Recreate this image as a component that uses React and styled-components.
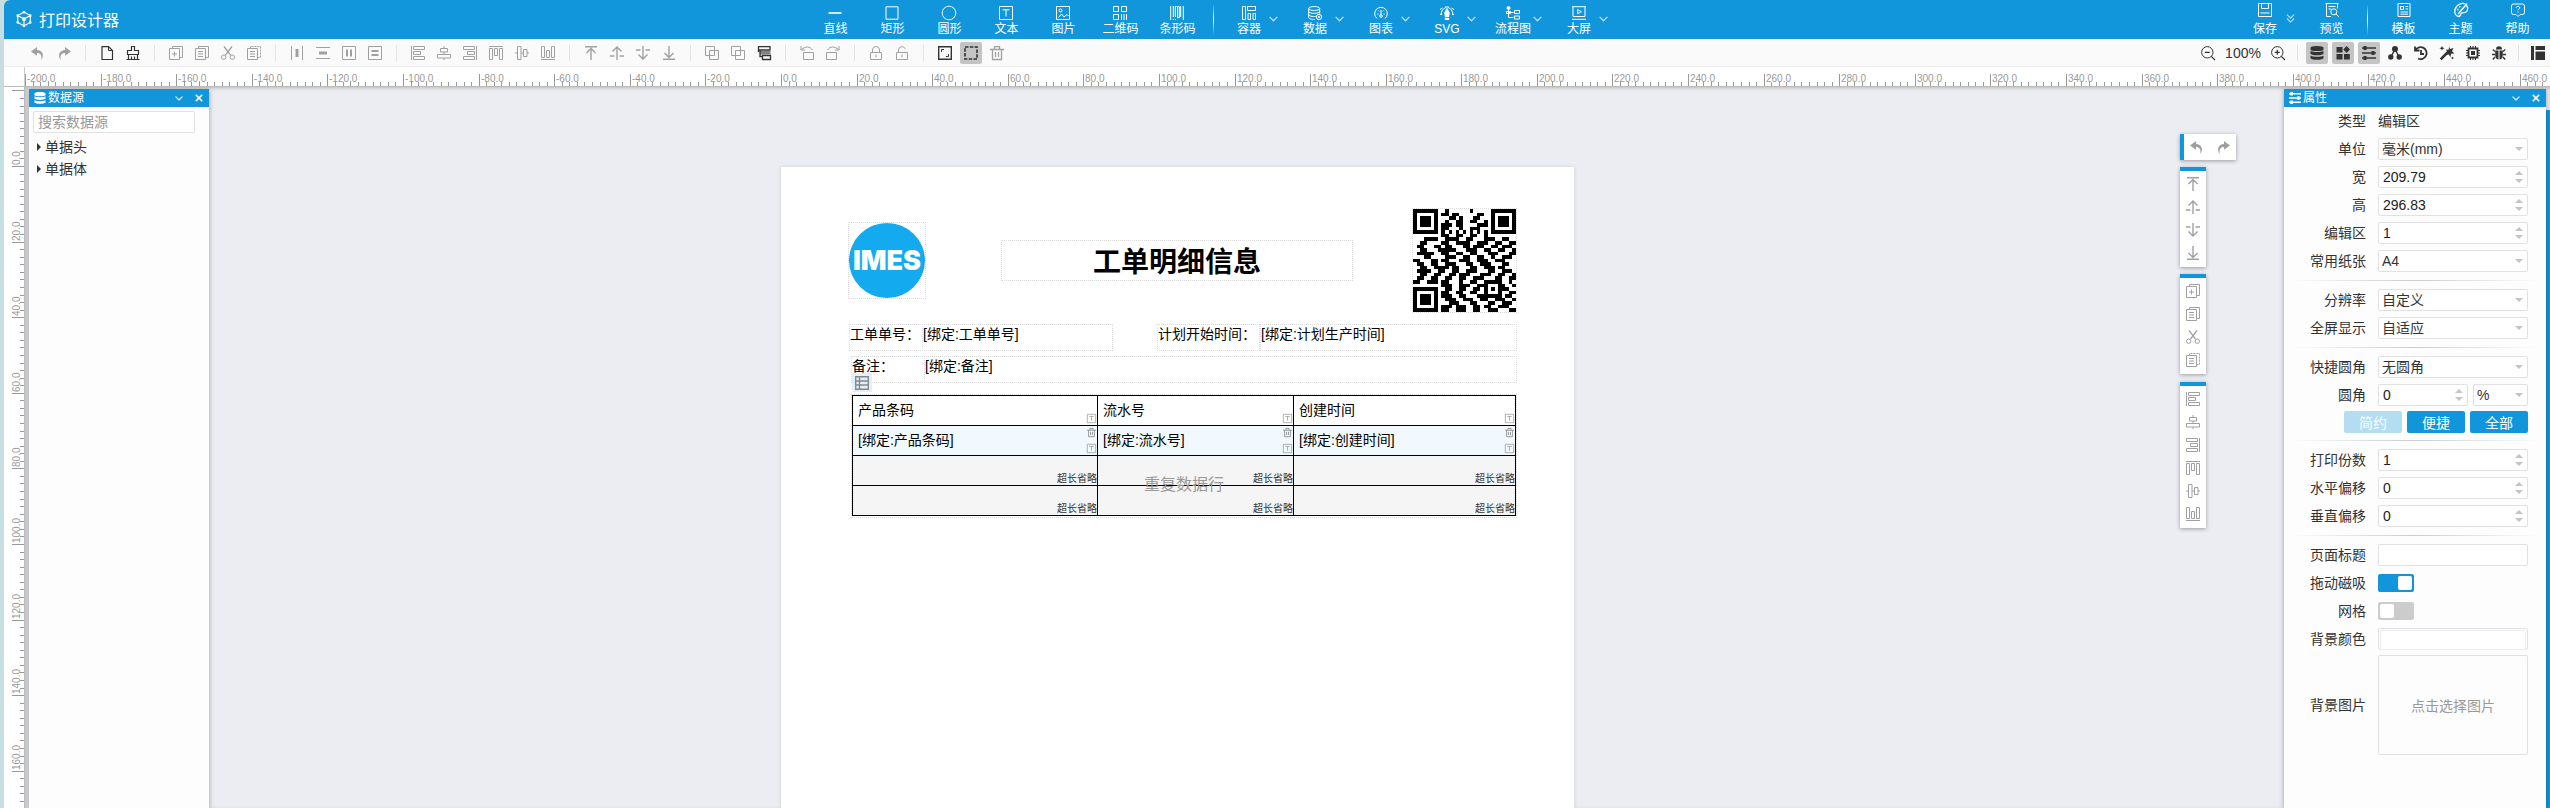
import React from "react";
import styled, { createGlobalStyle, css } from "styled-components";

const BLUE = "#1296db";
const LINE = "#e1e1e1";
const MM = 96 / 25.4;

const GlobalStyle = createGlobalStyle`
  * { box-sizing: border-box; }
  body {
    margin: 0;
    background: #c6dde1;
    color: #333;
    font-family: "Liberation Sans", "Noto Sans CJK SC", sans-serif;
    font-size: 14px;
    overflow: hidden;
  }
  button, input, select { font: inherit; color: inherit; margin: 0; }
  button { background: none; border: 0; padding: 0; }
`;

/* ---------- icons ---------- */

const L = (d, extra = {}) => <path d={d} {...extra} />;
const F = (d, extra = {}) => <path d={d} fill="currentColor" stroke="none" {...extra} />;

const ICONS = {
  undo: F("M6 1 0 5.600l6 4.200V7c3.600 0 5 2 4.300 7 3.500-5 1.200-9.700-4.300-10z"),
  redo: F("M8 1 14 5.600 8 9.800V7c-3.600 0-5 2-4.300 7C.2 9 2.500 4.300 8 4z"),
  file: <>{L("M2 .600h6.500l4 4v8.900H2z", { strokeWidth: 1.2 })}{L("M8.500.500v4h4")}</>,
  broom: <>{L("M5.500.500h3v4h4v4h-11v-4h4z", { strokeWidth: 1.2 })}{L("M2.500 8.500v5h9v-5M5.500 10.500v3M8.500 10.500v3M.5 13.500h13", { strokeWidth: 1.2 })}</>,
  copyAdd: <>{L("M3.500 2.500V.5h10v11h-3M.5 2.500h10v11H.5zM5.500 5.500v5M3 8h5")}</>,
  copy: <>{L("M3.500 2.500V.5h10v11h-3M.5 2.500h10v11H.5zM3 5.500h5M3 8h5M3 10.500h5")}</>,
  cut: <>{L("M3 .5 9.600 9.200M11 .5 4.400 9.200", { strokeWidth: 1.3 })}<circle cx="2.700" cy="11.200" r="2.200" /><circle cx="11.300" cy="11.200" r="2.200" /></>,
  paste: <>{L("M3.500 2.500V.5h10v11h-3", { strokeDasharray: "2 1" })}{L("M.5 2.500h10v11H.5zM3 5.500h5M3 8h5M3 10.500h5")}</>,
  distH: <>{L("M1.500 0v14M12.500 0v14")}{F("M5.500 3h3v8h-3z")}</>,
  distV: <>{L("M0 1.500h14M0 12.500h14")}{F("M3 5.500h8v3H3z")}</>,
  boxH: <>{L("M.5.5h13v13H.5z")}{F("M4 3.500h2v7H4zM8 3.500h2v7H8z")}</>,
  boxV: <>{L("M.5.5h13v13H.5z")}{F("M3.500 4h7v2h-7zM3.500 8h7v2h-7z")}</>,
  alignL: L("M.5 0v14M2.500.5h11v3h-11zM2.500 5.500h7v3h-7zM2.500 10.500h11v3h-11z"),
  alignC: L("M7 0v2.500M7 6v2.500M7 12v2M3.500 2.500h7v3.500h-7zM.5 8.500h13v3.500H.5z"),
  alignR: L("M13.500 0v14M.5.5h11v3H.5zM4.500 5.500h7v3h-7zM.5 10.500h11v3H.5z"),
  alignT: L("M0 .5h14M.5 2.500h3v11h-3zM5.500 2.500h3v7h-3zM10.500 2.500h3v11h-3z"),
  alignM: L("M0 7h2.500M6 7h2.500M12 7h2M2.500.5h3.500v13H2.500zM8.500 3.500h3.500v7H8.500z"),
  alignB: L("M0 13.500h14M.5.5h3v11h-3zM5.500 4.500h3v7h-3zM10.500.5h3v11h-3z"),
  toTop: L("M1 .7h12M7 14V2.500M2.500 7 7 2.500 11.500 7", { strokeWidth: 1.4 }),
  up: L("M7 14V1M2.500 5.500 7 1l4.500 4.500M0 10h4.500M9.500 10H14", { strokeWidth: 1.4 }),
  down: L("M7 0v13M2.500 8.500 7 13l4.500-4.500M0 4h4.500M9.500 4H14", { strokeWidth: 1.4 }),
  toBottom: L("M1 13.300h12M7 0v11.500M2.500 7 7 11.500 11.500 7", { strokeWidth: 1.4 }),
  group: L("M5.500 9.500h-5v-9h9v5M9.500 4.500h4v9h-9V8.500M5 9.500h4.500V5M4.500 9V4.500h5"),
  ungroup: L("M.5.5h9v9h-9zM4.500 4.500h9v9h-9z"),
  format: <>{L("M1.500.6h11.500v3.400H1.500z", { strokeWidth: 1.3 })}{F("M3 5h10.500v3.500H3z", { opacity: 0.6 })}{L("M5.500 9.500h8v4h-8zM3 4v6.500h2.500M1.500 4v2", { strokeWidth: 1.3 })}</>,
  rotL: L("M3.500 6.500h10v7h-10zM12.500 4C10 .3 5.500 0 1.500 3.500M1 0v4h4"),
  rotR: L("M.5 6.500h10v7H.5zM1.500 4C4 .3 8.500 0 12.500 3.500M13 0v4H9"),
  lock: L("M1.500 6.500h11v7h-11zM3.500 6.500V4a3.500 3.500 0 0 1 7 0v2.500M7 8.500v3"),
  unlock: L("M1.500 6.500h11v7h-11zM3.500 6.500V4a3.500 3.500 0 0 1 6.800-1M7 8.500v3"),
  fit: <>{L("M.7.7h12.600v12.600H.7z", { strokeWidth: 1.4 })}{L("M3.500 6V3.500H6M10.500 8v2.500H8")}</>,
  dashed: L("M1 1h12v12H1z", { strokeWidth: 1.600, strokeDasharray: "3.500 1.300" }),
  trash: L("M0 3.500h14M4.500 3V.7h5V3M2.500 3.500v10h9v-10M5.500 6v5M8.500 6v5", { strokeWidth: 1.3 }),
  zoomOut: <><circle cx="6.300" cy="6.300" r="5.700" />{L("M10.300 10.300 14 14M3.800 6.300h5", { strokeWidth: 1.2 })}</>,
  zoomIn: <><circle cx="6.300" cy="6.300" r="5.700" />{L("M10.300 10.300 14 14M3.800 6.300h5M6.300 3.800v5", { strokeWidth: 1.2 })}</>,
  db: F("M7 0c4 0 6.500.8 6.500 1.800v1.600C13.500 4.400 11 5 7 5S.5 4.400.5 3.400V1.800C.5.8 3 0 7 0zM.5 5c3 1.400 10 1.400 13 0v3C11 9.700 3 9.700.5 8zM.5 9.700c3 1.400 10 1.400 13 0v2.500c-2 2.200-11 2.200-13 0z"),
  blocks: F("M.5 1h6v5.500h-6zM.5 8h6v5.500h-6zM8 8h5.800v5.500H8zM10.600 0l3.400 3.500-3.400 3.500L7.300 3.500z"),
  sliders: <>{L("M0 2h14M0 7h14M0 12h14", { strokeWidth: 1.600 })}{F("M1.500 0h3v4h-3zM9.500 5h3v4h-3zM1.500 10h3v4h-3z")}</>,
  nodes: <>{L("M7 3 3 11M7 3l4 8", { strokeWidth: 1.500 })}<circle cx="7" cy="3" r="3" fill="currentColor" stroke="none" /><circle cx="2.800" cy="11" r="2.700" fill="currentColor" stroke="none" /><circle cx="11.200" cy="11" r="2.700" fill="currentColor" stroke="none" /></>,
  history: L("M1.500 4A6 6 0 1 1 4 12.500M1 .5V4.500h4.500M7 4v4h3", { strokeWidth: 1.800 }),
  wand: <>{L("M.7 13.300 8 6", { strokeWidth: 2.600 })}{F("M9 .5l1 2.500 3.500-1-1.500 3.200L14.500 7.500l-3.500.3-.5 3.500-1.800-2.800-3 .5 1.700-2.800L6 3.500l2.700.3zM2 0l.8 1.600L4.500 2.300l-1.700.7L2 4.600l-.8-1.600L-.5 2.300l1.700-.7zM12.500 10.500l.5 1 1 .5-1 .5-.5 1-.5-1-1-.5 1-.5z")}</>,
  chip: <>{L("M2.500 2.500h9v9h-9z", { strokeWidth: 1.800 })}{F("M5 5h4v4H5z")}{L("M4.500 0v2M7 0v2M9.500 0v2M4.500 12v2M7 12v2M9.500 12v2M0 4.500h2M0 7h2M0 9.500h2M12 4.500h2M12 7h2M12 9.500h2")}</>,
  bug: <>{F("M4 3.500C4 1.500 5 .3 7 .3s3 1.200 3 3.200zM3.200 4.500h3.300v9C4 13.200 3.200 11 3.200 9zM7.500 4.500h3.300V9c0 2-.8 4.200-3.300 4.500z")}{L("M3 5.500 .8 3.500M0 8.500h3M3 11l-2.200 2.500M11 5.500l2.200-2M14 8.500h-3M11 11l2.200 2.500", { strokeWidth: 1.300 })}</>,
  layout: F("M0 0h3v14H0zM4.500 0H14v4H4.500zM4.500 5.500H14V14H4.500z"),
  line: L("M.5 7h13", { strokeWidth: 1.600 }),
  rect: L("M1 .8h12v12.400H1z"),
  circle: <circle cx="7" cy="7" r="6.800" />,
  text: L("M.5.5h13v13H.5zM3.500 3.800h7M7 3.800v6.700"),
  image: <>{L("M.5.5h13v13H.5zM2.500 11.500 5.500 8 8 11l3-2.500 1.500 1.500")}<circle cx="4.500" cy="4.500" r="1.500" /></>,
  qr: L("M.5.5h5v5h-5zM8.500.5h5v5h-5zM.5 8.500h5v5h-5zM8.500 8v6M11 8v6M13.500 8v6"),
  barcode: <>{L("M.7 0v14M3.300 0v11M5.300 0v11M10.700 0v11M13.300 0v14")}{L("M3.300 13v1M5.300 13v1M7 0v1M7.500.7h1.800v11H7.500z")}</>,
  container: L("M.5.5h3v13h-3zM5.500.5h8v4h-8zM6 7.500h2.500v6H6zM11 7.500h2.500v6H11z"),
  data: <>{L("M.7 2.500c0-2.600 11-2.600 11 0s-11 2.600-11 0zM.7 2.500v9c0 1.400 3 2 6 2M.7 5.500c0 2.400 11 2.400 11 0M.7 8.500c0 1.600 4 2.400 7 1.800M11.700 2.500v5")}<circle cx="11" cy="11" r="2.700" />{L("M11 9.800v2.400M9.800 11h2.400")}</>,
  gauge: <>{L("M3 12.500A6.300 6.300 0 1 1 11 12.500M7 9V4M3.300 8h1.200M9.500 8h1.200M4.300 4.500l.8.800M9.700 4.500l-.8.800")}<circle cx="7" cy="10" r="1.300" /></>,
  pen: <>{F("M7 1.500 9.800 7 9 11H5L4.200 7zM4.800 11.800h4.400V14H4.800z")}{L("M1 8.500C1.500 5 3 2.500 5.500 1.800M13 8.500c-.5-3.500-2-6-4.500-6.700M5 1h4M0 3.500l2.500-1.500M14 3.500 11.500 2M0 8.500h2M12 8.500h2")}</>,
  flow: <>{L("M2.500 1v10.500h5M2.500 6.500h5M8.500 4.500h5v3h-5zM8.500 10h5v3h-5z")}<circle cx="2.500" cy="2" r="1.500" fill="currentColor" />{L("M.5 5.500h4v2h-4z")}</>,
  screen: L("M0 .7h14M1 .7v9.800h12V.7M0 13.300h14M5.700 3.500v4.200L9.300 5.600z"),
  save: L("M.5.5h13v13H.5zM3.500.5v5h7v-5M2.500 10h9"),
  preview: <>{L("M6 13.500H1.500V.5h11v5M.5.5h13M3.500 3.500h7M3.500 6h2.500")}<circle cx="8.800" cy="8.800" r="3" />{L("M11 11l2.800 2.800")}</>,
  template: L("M1 .5h12v13H1zM3.500 3.500h3v3h-3zM8.500 3.500h2.500M8.500 6h2.500M3.500 9h7.500M3.500 11.200h7.500"),
  theme: L("M11.500.8C7.500-.8 1.500 2 .8 7.500c-.4 3 1.200 5.500 3.700 6 2.500 0 1.500-2.300 3-3.500 1.600-1 4 .5 5.300-1.500C14 6.200 13.400 3.500 12.500 2.500M13 .8 4 11M3 6.500h1.500M5 3.800h1.500", { strokeWidth: 1.300 }),
  help: <>{L("M2.500 1h9a2 2 0 0 1 2 2v6.500a2 2 0 0 1-2 2H9l-2 2-2-2H2.500a2 2 0 0 1-2-2V3a2 2 0 0 1 2-2z")}{L("M5.300 4.800c0-2 3.400-2 3.400 0 0 1.200-1.700 1.200-1.700 2.500M7 8.500v1.200")}</>,
  cube: <>{L("M7 1l5.500 3v6L7 13 1.500 10V4zM1.500 4 7 7l5.500-3M7 7v6")}{F("M6 0h2v2H6zM6 12h2v2H6zM.5 3h2v2h-2zM11.500 3h2v2h-2zM.5 9h2v2h-2zM11.500 9h2v2h-2zM5.500 5.500h3v3h-3z")}</>,
  chevron: L("M1 4.500l6 6 6-6", { strokeWidth: 2 }),
  chevrons: L("M1.500 1 7 6.500l5.500-5.500M1.500 7 7 12.500l5.500-5.500", { strokeWidth: 1.800 }),
  close: L("M1.500 1.500l11 11M12.500 1.500l-11 11", { strokeWidth: 2.600 }),
  table: L("M.7.7h12.600v12.600H.7zM4.500.7v12.600M.7 5h12.600M.7 9h12.600", { strokeWidth: 1.4 }),
};

const Svg = styled.svg`
  display: block;
  flex: none;
  overflow: visible;
`;

const Icon = ({ name, size = 14 }) => (
  <Svg viewBox="0 0 14 14" width={size} height={size} fill="none" stroke="currentColor" strokeWidth="1" aria-hidden="true">
    {ICONS[name]}
  </Svg>
);

/* ---------- shell ---------- */

const Shell = styled.div`
  height: 100vh;
  margin-left: 4px;
  display: flex;
  flex-direction: column;
  background: #fff;
  border-top-left-radius: 6px;
  overflow: hidden;
`;

const TopBar = styled.header`
  flex: none;
  height: 39px;
  display: flex;
  background: ${BLUE};
  color: #fff;
`;

const Brand = styled.h1`
  width: 31.5%;
  margin: 0;
  padding: 0 0 2px 12px;
  display: flex;
  align-items: center;
  gap: 7px;
  font-size: 16px;
  font-weight: 400;
`;

const Group = styled.nav`
  display: flex;
  padding-left: 1px;
  ${(p) => p.$end && "margin-left: auto; padding-right: 4px;"}
`;

const TopButton = styled.button`
  width: ${(p) => (p.$compact ? 40 : 57)}px;
  padding-bottom: 2px;
  display: flex;
  flex-direction: column;
  align-items: center;
  justify-content: flex-end;
  gap: ${(p) => (p.$raised ? 4 : 1)}px;
  font-size: 12px;
  line-height: 16px;
  white-space: nowrap;
`;

const DropCell = styled.div`
  width: 66px;
  padding-left: 8px;
  display: flex;
`;

const DropArrow = styled.button`
  width: 10px;
  display: flex;
  align-items: center;
  justify-content: center;
  padding-bottom: 2px;
  opacity: 0.7;
`;

const TopDivider = styled.i`
  width: 1px;
  margin: 4px 7px;
  background: linear-gradient(transparent, #fff, transparent);
`;

const TopItem = ({ icon, label, drop, raised }) => {
  const button = (
    <TopButton $compact={!!drop} $raised={raised}>
      <Icon name={icon} />
      {label}
    </TopButton>
  );
  if (!drop) return button;
  return (
    <DropCell>
      {button}
      <DropArrow aria-label={label}>
        <Icon name={drop} size={9} />
      </DropArrow>
    </DropCell>
  );
};

/* ---------- tool bar ---------- */

const ToolBar = styled.div`
  flex: none;
  height: 28px;
  padding: 0 1px 0 23px;
  display: flex;
  align-items: center;
  justify-content: space-between;
  background: #fafafa;
  border-bottom: 1px solid #ececec;
`;

const ToolRow = styled.div`
  display: flex;
  align-items: center;
  gap: 4px;
`;

const ToolButton = styled.button`
  width: 22px;
  height: 22px;
  display: flex;
  align-items: center;
  justify-content: center;
  border-radius: 2px;
  color: ${(p) => (p.$dark ? "#333" : "#a0a0a0")};
  background: ${(p) => (p.$active ? "#c4c4c4" : "none")};
`;

const ToolDivider = styled.i`
  width: 1px;
  height: 16px;
  margin: 0 ${(p) => (p.$tight ? 4 : 6)}px;
  background: #e4e4e4;
`;

const ZoomText = styled.span`
  width: 40px;
  text-align: center;
`;

const LEFT_TOOLS = [
  "undo", "redo", "|", "*file", "*broom", "|", "copyAdd", "copy", "cut", "paste", "|",
  "distH", "distV", "boxH", "boxV", "|", "alignL", "alignC", "alignR", "alignT", "alignM", "alignB", "|",
  "toTop", "up", "down", "toBottom", "|", "group", "ungroup", "*format", "|", "rotL", "rotR", "|",
  "lock", "unlock", "|", "*fit", "#dashed", "trash",
];
const RIGHT_TOOLS = ["#db", "#blocks", "#sliders", "*nodes", "*history", "*wand", "*chip", "*bug", "|", "*layout"];

const Tools = ({ list, tight }) =>
  list.map((t, i) => {
    if (t === "|") return <ToolDivider key={i} $tight={tight} />;
    const name = t.replace(/[*#]/, "");
    return (
      <ToolButton key={i} $dark={name !== t} $active={t[0] === "#"} aria-label={name}>
        <Icon name={name} />
      </ToolButton>
    );
  });

/* ---------- rulers ---------- */

const RulerRow = styled.div`
  flex: none;
  height: 20px;
  display: flex;
  border-bottom: 1px solid #bbb;
`;

const RulerCorner = styled.div`
  width: 21px;
  border-right: 1px solid #ccc;
`;

const RulerSvg = styled.svg`
  display: block;
  flex: 1;
  min-width: 0;
  width: 100%;
  height: 100%;
  fill: #999;
  font-size: 10px;
`;

const SideRuler = styled.div`
  flex: none;
  width: 21px;
  border-right: 1px solid #bbb;
`;

const range = (from, to, step) => {
  const out = [];
  for (let v = from; v <= to; v += step) out.push(v);
  return out;
};

const HRuler = ({ origin }) => (
  <RulerSvg>
    {range(-200, 468, 2).map((v) => {
      const x = Math.round(origin + v * MM);
      const major = v % 20 === 0;
      return (
        <g key={v}>
          <rect x={x} y={major ? 7 : 15} width="1" height={major ? 12 : 4} />
          {major && <text x={x + 2} y="15">{v.toFixed(1)}</text>}
        </g>
      );
    })}
  </RulerSvg>
);

const VRuler = ({ origin }) => (
  <RulerSvg>
    {range(-20, 170, 2).map((v) => {
      const y = Math.round(origin + v * MM);
      const major = v % 20 === 0;
      return (
        <g key={v}>
          <rect x={major ? 8 : 16} y={y} width={major ? 12 : 4} height="1" />
          {major && v >= 0 && <text transform={`translate(16 ${y - 1}) rotate(-90)`}>{v.toFixed(1)}</text>}
        </g>
      );
    })}
  </RulerSvg>
);

/* ---------- work area ---------- */

const Body = styled.main`
  flex: 1;
  min-height: 0;
  display: flex;
`;

const Canvas = styled.div`
  position: relative;
  flex: 1;
  min-width: 0;
  display: flex;
  justify-content: space-between;
  padding: 2px 0 0 4px;
  background: #ecedf3;
  box-shadow: inset 0 3px 4px -2px #bbb, inset 3px 0 4px -2px #bbb;
  overflow: hidden;
`;

const Panel = styled.section`
  position: relative;
  width: ${(p) => p.$width}px;
  display: flex;
  flex-direction: column;
  background: #fdfdfd;
  box-shadow: 0 1px 5px rgba(0, 0, 0, 0.35);
`;

const PanelHead = styled.header`
  flex: none;
  height: 18px;
  padding: 0 6px 0 5px;
  display: flex;
  align-items: center;
  gap: 2px;
  background: ${BLUE};
  color: #fff;
  font-size: 12px;
  line-height: 18px;
`;

const PanelTitle = styled.h2`
  flex: 1;
  margin: 0;
  font-size: 12px;
  font-weight: 400;
`;

const HeadButtons = styled.div`
  display: flex;
  gap: 12px;
`;

const Head = ({ icon, title }) => (
  <PanelHead>
    <Icon name={icon} size={12} />
    <PanelTitle>{title}</PanelTitle>
    <HeadButtons>
      <button aria-label="collapse"><Icon name="chevron" size={8} /></button>
      <button aria-label="close"><Icon name="close" size={8} /></button>
    </HeadButtons>
  </PanelHead>
);

const fieldBox = css`
  height: 22px;
  width: 100%;
  padding: 0 4px;
  border: 1px solid ${LINE};
  border-radius: 2px;
  background: #fff;
  outline: none;
`;

const Search = styled.input`
  ${fieldBox}
  width: 162px;
  margin: 4px 4px 3px;
  &::placeholder { color: #999; opacity: 1; }
`;

const Tree = styled.ul`
  list-style: none;
  margin: 0;
  padding: 0 0 0 8px;
`;

const TreeItem = styled.li`
  height: 22px;
  line-height: 22px;
  display: flex;
  align-items: center;
  gap: 4px;
  &::before {
    content: "";
    border-left: 4px solid #333;
    border-top: 4px solid transparent;
    border-bottom: 4px solid transparent;
  }
`;

const RightDock = styled.div`
  display: flex;
`;

const Edge = styled.div`
  width: 4px;
  margin-top: 21px;
  background: ${BLUE};
`;

/* ---------- property form ---------- */

const PropRow = styled.div`
  flex: none;
  min-height: 28px;
  padding: ${(p) => (p.$tall ? 2 : 0)}px 18px ${(p) => (p.$tall ? 2 : 0)}px 0;
  display: flex;
  align-items: center;
  gap: 12px;
`;

const PropLabel = styled.label`
  flex: 1;
  padding-bottom: 2px;
  text-align: right;
`;

const PropText = styled.span`
  padding-bottom: 2px;
`;

const PropValue = styled.div`
  width: 150px;
  display: flex;
  gap: 5px;
`;

const Control = styled.span`
  position: relative;
  display: block;
  flex: ${(p) => (p.$width ? `0 0 ${p.$width}px` : 1)};
  &::before, &::after {
    content: "";
    position: absolute;
    right: 5px;
    border: 4px solid transparent;
    pointer-events: none;
  }
  ${(p) => p.$kind === "select" && `&::after { top: 9px; border-top-color: #c4c4c4; border-bottom: 0; }`}
  ${(p) => p.$kind === "number" && `
    &::before { top: 5px; border-bottom-color: #c4c4c4; border-top: 0; }
    &::after { top: 13px; border-top-color: #c4c4c4; border-bottom: 0; }
  `}
`;

const Select = styled.select`
  ${fieldBox}
  display: block;
  padding: 0 3px;
  appearance: none;
`;

const Input = styled.input`
  ${fieldBox}
  display: block;
  color: #222;
`;

const SelectField = ({ id, value, width }) => (
  <Control $kind="select" $width={width}>
    <Select id={id} aria-label={id} defaultValue={value}><option>{value}</option></Select>
  </Control>
);

const NumberField = ({ id, value, width }) => (
  <Control $kind="number" $width={width}>
    <Input id={id} inputMode="decimal" defaultValue={value} />
  </Control>
);

const Divider = styled.hr`
  flex: none;
  width: 250px;
  height: 1px;
  margin: 5px auto;
  border: 0;
  background: linear-gradient(90deg, transparent, #ccc, transparent);
`;

const ButtonRow = styled.div`
  padding: 2px 18px 2px 0;
  display: flex;
  justify-content: flex-end;
  gap: 5px;
`;

const SmallButton = styled.button`
  width: 58px;
  height: 22px;
  border-radius: 2px;
  background: ${BLUE};
  color: #fff;
  opacity: ${(p) => (p.disabled ? 0.3 : 1)};
`;

const Switch = styled.input`
  appearance: none;
  width: 36px;
  height: 18px;
  padding: 2px;
  display: flex;
  background: #ccc;
  border-radius: 2px;
  &::before {
    content: "";
    width: 14px;
    height: 14px;
    background: #fff;
    border-radius: 2px;
  }
  &:checked { background: ${BLUE}; justify-content: flex-end; }
`;

const ColorButton = styled.button`
  ${fieldBox}
  padding: 1px;
  &::before {
    content: "";
    display: block;
    height: 18px;
    border: 1px solid #ecedf3;
  }
`;

const PictureButton = styled.button`
  width: 150px;
  height: 100px;
  border: 1px solid ${LINE};
  border-radius: 2px;
  color: #999;
`;

const Row = ({ label, id, children, tall }) => (
  <PropRow $tall={tall}>
    <PropLabel htmlFor={id}>{label}</PropLabel>
    <PropValue>{children}</PropValue>
  </PropRow>
);

/* ---------- floating palettes ---------- */

const Palette = styled.div`
  position: absolute;
  right: ${(p) => (p.$row ? 314 : 344)}px;
  top: ${(p) => p.$top}px;
  display: flex;
  flex-direction: ${(p) => (p.$row ? "row" : "column")};
  align-items: center;
  gap: ${(p) => (p.$row ? 4 : 1)}px;
  padding: ${(p) => (p.$row ? "2px" : "2px 2px 3px")};
  border: 0 solid ${BLUE};
  ${(p) => (p.$row ? "border-left-width: 4px;" : "border-top-width: 4px;")}
  background: #fff;
  box-shadow: 0 1px 4px rgba(0, 0, 0, 0.35);
`;

const PALETTES = [
  { top: 47, row: true, items: ["undo", "redo"] },
  { top: 80, items: ["toTop", "up", "down", "toBottom"] },
  { top: 187, items: ["copyAdd", "copy", "cut", "paste"] },
  { top: 295, items: ["alignL", "alignC", "alignR", "alignT", "alignM", "alignB"] },
];

/* ---------- printed page ---------- */

const Page = styled.article`
  position: absolute;
  left: 756px;
  top: 80px;
  width: 793px;
  height: 1122px;
  background: #fff;
  color: #000;
  box-shadow: 0 0 4px rgba(0, 0, 0, 0.12);
`;

const Box = styled.div`
  position: absolute;
  left: ${(p) => p.$x}px;
  top: ${(p) => p.$y}px;
  width: ${(p) => p.$w}px;
  height: ${(p) => p.$h}px;
  border: 1px dotted #dcdcdc;
  line-height: 19px;
  white-space: nowrap;
`;

const DocTitle = styled(Box).attrs({ as: "h2" })`
  margin: 0;
  text-align: center;
  font-size: 28px;
  line-height: 43px;
  font-weight: 700;
`;

const Logo = styled.div`
  height: 100%;
  border-radius: 50%;
  background: #14aaf0;
  color: #fff;
  display: flex;
  align-items: center;
  justify-content: center;
  font: 900 27px Inter, sans-serif;
`;

const TableTag = styled.span`
  position: absolute;
  left: 71px;
  top: 206px;
  width: 20px;
  height: 19px;
  display: flex;
  align-items: center;
  justify-content: center;
  background: rgba(214, 234, 250, 0.7);
  color: #888;
`;

const Grid = styled.table`
  width: 664px;
  table-layout: fixed;
  border-collapse: collapse;
`;

const Cell = styled.td`
  position: relative;
  height: 30px;
  padding: 0 5px;
  border: 1px solid #000;
  background: ${(p) => p.$bg || "#fff"};
`;

const Marks = styled.span`
  position: absolute;
  right: 1px;
  bottom: 2px;
  top: 2px;
  display: flex;
  flex-direction: column;
  justify-content: ${(p) => (p.$both ? "space-between" : "flex-end")};
  align-items: flex-end;
  color: #888;
`;

const Ellipsis = styled.span`
  position: absolute;
  right: 0;
  bottom: 0;
  font-size: 10px;
  line-height: 12px;
  color: #333;
`;

const Repeat = styled.span`
  position: absolute;
  left: 0;
  right: 0;
  top: 78px;
  text-align: center;
  font-size: 16px;
  line-height: 24px;
  color: #999;
`;

const COLS = [["产品条码", 245], ["流水号", 196], ["创建时间", 222]];

const QR = [
  "11111110010000001000001111111",
  "10000010110110000011001000001",
  "10111010001101000110001011101",
  "10111010010011001100101011101",
  "10111010111011000011101011101",
  "10000010110001001110001000001",
  "11111110101010101010101111111",
  "00000000110011001100100000000",
  "00011110011110011000111001100",
  "00110000110011110011100110011",
  "01100011011000110111001101110",
  "00110001111100011100110011001",
  "01111100110011001100011100011",
  "00011000011100110011001001110",
  "11000110110001110011100111000",
  "01100110011100011001110001100",
  "00110011110110001100111011000",
  "01111001100110011100011001110",
  "00110011001101110001110011001",
  "01100110011001100111000110011",
  "11001110110001001100111110010",
  "00000000111001110011100011001",
  "11111110011001100110101011100",
  "10000010110011001100100010011",
  "10111010111001100011111110110",
  "10111010011100111001100111001",
  "10111010001110001100011001110",
  "10000010111011100110110011100",
  "11111110110011100110011100011",
];

const QrCode = () => (
  <Svg viewBox="0 0 29 29" width="103" height="103" shapeRendering="crispEdges" role="img" aria-label="QR">
    <path d={QR.map((r, y) => [...r].map((c, x) => (c === "1" ? `M${x} ${y}h1v1h-1z` : "")).join("")).join("")} />
  </Svg>
);

export default function App() {
  return (
    <>
      <GlobalStyle />
      <Shell>
        <TopBar>
          <Brand><Icon name="cube" size={16} />打印设计器</Brand>
          <Group>
            <TopItem icon="line" label="直线" />
            <TopItem icon="rect" label="矩形" />
            <TopItem icon="circle" label="圆形" />
            <TopItem icon="text" label="文本" />
            <TopItem icon="image" label="图片" />
            <TopItem icon="qr" label="二维码" />
            <TopItem icon="barcode" label="条形码" />
            <TopDivider />
            <TopItem icon="container" label="容器" drop="chevron" />
            <TopItem icon="data" label="数据" drop="chevron" />
            <TopItem icon="gauge" label="图表" drop="chevron" />
            <TopItem icon="pen" label="SVG" drop="chevron" />
            <TopItem icon="flow" label="流程图" drop="chevron" />
            <TopItem icon="screen" label="大屏" drop="chevron" />
          </Group>
          <Group $end>
            <TopItem icon="save" label="保存" drop="chevrons" raised />
            <TopItem icon="preview" label="预览" raised />
            <TopDivider />
            <TopItem icon="template" label="模板" raised />
            <TopItem icon="theme" label="主题" raised />
            <TopItem icon="help" label="帮助" raised />
          </Group>
        </TopBar>

        <ToolBar>
          <ToolRow><Tools list={LEFT_TOOLS} /></ToolRow>
          <ToolRow>
            <Tools list={["*zoomOut"]} />
            <ZoomText>100%</ZoomText>
            <Tools tight list={["*zoomIn", "|", ...RIGHT_TOOLS]} />
          </ToolRow>
        </ToolBar>

        <RulerRow>
          <RulerCorner />
          <HRuler origin={756} />
        </RulerRow>

        <Body>
          <SideRuler><VRuler origin={79} /></SideRuler>
          <Canvas>
            <Page>
              <Box $x={67} $y={55} $w={78} $h={77}><Logo>IMES</Logo></Box>
              <DocTitle $x={220} $y={73} $w={352} $h={41}>工单明细信息</DocTitle>
              <Box $x={631} $y={41} $w={105} $h={105}><QrCode /></Box>
              <Box $x={68} $y={157} $w={74} $h={27}>工单单号：</Box>
              <Box $x={141} $y={157} $w={191} $h={27}>[绑定:工单单号]</Box>
              <Box $x={376} $y={157} $w={103} $h={27}>计划开始时间：</Box>
              <Box $x={479} $y={157} $w={257} $h={27}>[绑定:计划生产时间]</Box>
              <Box $x={70} $y={189} $w={74} $h={27}>备注：</Box>
              <Box $x={143} $y={189} $w={593} $h={27}>[绑定:备注]</Box>
              <TableTag><Icon name="table" /></TableTag>
              <Box $x={70} $y={227} $w={666} $h={124}>
                <Grid>
                  <colgroup>{COLS.map(([n, w]) => <col key={n} width={w} />)}</colgroup>
                  <tbody>
                    <tr>
                      {COLS.map(([n]) => (
                        <Cell key={n}>{n}<Marks><Icon name="text" size={9} /></Marks></Cell>
                      ))}
                    </tr>
                    <tr>
                      {COLS.map(([n]) => (
                        <Cell key={n} $bg="#f1f9fe">
                          [绑定:{n}]
                          <Marks $both><Icon name="trash" size={9} /><Icon name="text" size={9} /></Marks>
                        </Cell>
                      ))}
                    </tr>
                    {[0, 1].map((r) => (
                      <tr key={r}>
                        {COLS.map(([n]) => <Cell key={n} $bg="#f5f5f5"><Ellipsis>超长省略</Ellipsis></Cell>)}
                      </tr>
                    ))}
                  </tbody>
                </Grid>
                <Repeat>重复数据行</Repeat>
              </Box>
            </Page>

            <Panel $width={180}>
              <Head icon="db" title="数据源" />
              <Search placeholder="搜索数据源" aria-label="搜索数据源" />
              <Tree>
                <TreeItem>单据头</TreeItem>
                <TreeItem>单据体</TreeItem>
              </Tree>
            </Panel>

            {PALETTES.map((p) => (
              <Palette key={p.top} $top={p.top} $row={p.row}>
                {p.items.map((n) => (
                  <ToolButton key={n} aria-label={n}><Icon name={n} /></ToolButton>
                ))}
              </Palette>
            ))}

            <RightDock>
              <Panel $width={262}>
                <Head icon="sliders" title="属性" />
                <Row label="类型"><PropText>编辑区</PropText></Row>
                <Row label="单位" id="unit"><SelectField id="unit" value="毫米(mm)" /></Row>
                <Row label="宽" id="width"><NumberField id="width" value="209.79" /></Row>
                <Row label="高" id="height"><NumberField id="height" value="296.83" /></Row>
                <Row label="编辑区" id="areas"><NumberField id="areas" value="1" /></Row>
                <Row label="常用纸张" id="paper"><SelectField id="paper" value="A4" /></Row>
                <Divider />
                <Row label="分辨率" id="resolution"><SelectField id="resolution" value="自定义" /></Row>
                <Row label="全屏显示" id="full"><SelectField id="full" value="自适应" /></Row>
                <Divider />
                <Row label="快捷圆角" id="corner"><SelectField id="corner" value="无圆角" /></Row>
                <Row label="圆角" id="radius">
                  <NumberField id="radius" value="0" width={90} />
                  <SelectField id="radius-unit" value="%" width={55} />
                </Row>
                <ButtonRow>
                  <SmallButton disabled>简约</SmallButton>
                  <SmallButton>便捷</SmallButton>
                  <SmallButton>全部</SmallButton>
                </ButtonRow>
                <Divider />
                <Row label="打印份数" id="copies"><NumberField id="copies" value="1" /></Row>
                <Row label="水平偏移" id="dx"><NumberField id="dx" value="0" /></Row>
                <Row label="垂直偏移" id="dy"><NumberField id="dy" value="0" /></Row>
                <Divider />
                <Row label="页面标题" id="title"><Input id="title" /></Row>
                <Row label="拖动磁吸" id="snap"><Switch id="snap" type="checkbox" defaultChecked /></Row>
                <Row label="网格" id="grid"><Switch id="grid" type="checkbox" /></Row>
                <Row label="背景颜色" id="bg"><ColorButton id="bg" aria-label="背景颜色" /></Row>
                <Row label="背景图片" id="picture" tall><PictureButton id="picture">点击选择图片</PictureButton></Row>
              </Panel>
              <Edge />
            </RightDock>
          </Canvas>
        </Body>
      </Shell>
    </>
  );
}
